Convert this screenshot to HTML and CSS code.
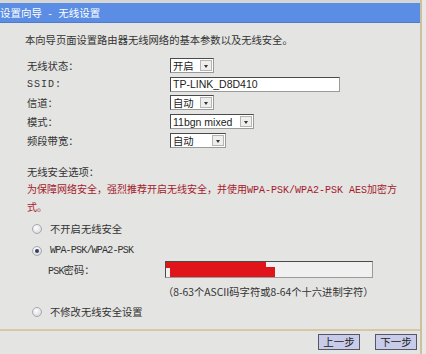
FILE: index.html
```html
<!DOCTYPE html>
<html lang="zh-CN">
<head>
    <meta charset="UTF-8">
    <title>设置向导 - 无线设置</title>
    <link rel="stylesheet" href="styles.css">
</head>
<body>

<div class="page">
    <div class="top-strip"></div>
    <div class="title-bar">设置向导 - 无线设置</div>

    <div class="content">
        <p class="intro">本向导页面设置路由器无线网络的基本参数以及无线安全。</p>

        <!-- 基本参数 -->
        <div class="fields">
            <div class="row">
                <span class="lbl">无线状态：</span>
                <div class="sel sel-state"><span>开启</span><i class="arr"></i></div>
            </div>
            <div class="row">
                <span class="lbl mono">SSID:</span>
                <div class="txt txt-ssid">TP-LINK_D8D410</div>
            </div>
            <div class="row">
                <span class="lbl">信道：</span>
                <div class="sel sel-state"><span>自动</span><i class="arr"></i></div>
            </div>
            <div class="row">
                <span class="lbl">模式：</span>
                <div class="sel sel-mode"><span class="latin">11bgn mixed</span><i class="arr"></i></div>
            </div>
            <div class="row">
                <span class="lbl">频段带宽：</span>
                <div class="sel sel-band"><span>自动</span><i class="arr"></i></div>
            </div>
        </div>

        <!-- 安全选项 -->
        <div class="sec-title">无线安全选项：</div>
        <p class="warn">为保障网络安全，强烈推荐开启无线安全，并使用<span class="mono-red">WPA-PSK/WPA2-PSK AES</span>加密方<br>式。</p>

        <div class="radio-row r1">
            <i class="radio"></i><span>不开启无线安全</span>
        </div>
        <div class="radio-row r2">
            <i class="radio checked"></i><span class="mono-sm">WPA-PSK/WPA2-PSK</span>
        </div>
        <div class="psk-row">
            <span class="psk-lbl"><span class="mono-sm">PSK</span>密码：</span>
            <div class="txt txt-psk">
                <div class="redact-a"></div>
                <div class="redact-b"></div>
            </div>
        </div>
        <div class="hint">（8-63个ASCII码字符或8-64个十六进制字符）</div>
        <div class="radio-row r3">
            <i class="radio"></i><span>不修改无线安全设置</span>
        </div>
    </div>

    <div class="footer">
        <button class="btn">上一步</button>
        <button class="btn">下一步</button>
    </div>
</div>

</body>
</html>
```

FILE: styles.css
```css
body {
    margin: 0;
    padding: 0;
    background-color: #e8e8e6;
    font-family: "Noto Sans CJK SC", "Liberation Sans", sans-serif;
    font-size: 10.3px;
    color: #333;
}
.page {
    width: 422px;
    height: 354px;
    border-right: 2px solid #cdbf9f;
    box-sizing: border-box;
    background-color: #e4e4e2;
    display: flex;
    flex-direction: column;
}
.top-strip {
    height: 3px;
    background-color: #d6d6d4;
}
.title-bar {
    height: 19px;
    line-height: 19px;
    background-color: #5a8de3;
    border-bottom: 1px solid #4f7cc9;
    color: #fff;
    font-size: 10.5px;
    word-spacing: 4px;
    white-space: pre;
}
.content {
    padding-left: 27px;
    flex: 1;
}
.intro {
    margin: 9px 0 0 -2px;
    height: 16px;
    line-height: 16px;
}
/* Campos */
.fields {
    margin-top: 8px;
}
.row {
    height: 18.75px;
    display: flex;
    align-items: center;
}
.lbl {
    width: 143px;
}
.mono {
    font-family: "Liberation Mono", monospace;
    font-size: 10px;
    letter-spacing: 1px;
}
.sel, .txt {
    height: 15px;
    box-sizing: border-box;
    border: 1px solid #4a4a4a;
    border-right-color: #9a9a9a;
    border-bottom-color: #9a9a9a;
    background-color: #fff;
    display: flex;
    align-items: center;
    padding-left: 2px;
    color: #222;
}
.sel span {
    flex: 1;
}
.latin, .txt-ssid {
    font-family: "Liberation Sans", Arial, sans-serif;
    font-size: 10.5px;
}
.arr {
    width: 12px;
    height: 11px;
    box-sizing: border-box;
    margin-right: 1px;
    border: 1px solid #b5b5b5;
    background-color: #eeeeec;
    position: relative;
}
.arr::after {
    content: "";
    position: absolute;
    left: 3px;
    top: 4px;
    border-left: 2.5px solid transparent;
    border-right: 2.5px solid transparent;
    border-top: 3px solid #333;
}
.sel-state { width: 44px; }
.sel-mode { width: 84px; }
.sel-band { width: 56px; }
.txt-ssid { width: 170px; }

.sec-title {
    margin-top: 14px;
    height: 16px;
    line-height: 16px;
}
.warn {
    margin: 1px 0 0 0;
    font-size: 10px;
    line-height: 16px;
    color: #a41a2b;
    white-space: nowrap;
}
.mono-red {
    font-family: "Liberation Mono", monospace;
    font-size: 10px;
}
.mono-sm {
    font-family: "Liberation Mono", monospace;
    font-size: 10px;
    letter-spacing: -0.8px;
}
.radio-row {
    display: flex;
    align-items: center;
    height: 16px;
    padding-left: 5px;
    gap: 8px;
}
.r1 { margin-top: 6px; }
.r2 { margin-top: 6px; }
.r3 { margin-top: 4px; }
.radio {
    width: 10px;
    height: 10px;
    border-radius: 50%;
    box-sizing: border-box;
    border: 1px solid #a8a8b0;
    background: radial-gradient(circle at 40% 35%, #fff, #d0d0d4);
    position: relative;
}
.radio.checked::after {
    content: "";
    position: absolute;
    left: 2px;
    top: 2px;
    width: 4px;
    height: 4px;
    border-radius: 50%;
    background-color: #2f3f6a;
}
.psk-row {
    display: flex;
    align-items: center;
    height: 18px;
    margin-top: 2px;
    padding-left: 21px;
}
.psk-lbl {
    width: 117px;
}
.txt-psk {
    width: 208px;
    height: 17px;
    padding: 0;
    display: block;
    position: relative;
    background-color: #f0f0f0;
}
.redact-a {
    position: absolute;
    left: 0;
    top: 0;
    width: 100px;
    height: 6px;
    background-color: #e0141b;
}
.redact-b {
    position: absolute;
    left: 4px;
    top: 5px;
    width: 105px;
    height: 10px;
    background-color: #e0141b;
}
.hint {
    margin-top: 5px;
    padding-left: 136px;
    height: 16px;
    line-height: 16px;
}
.footer {
    height: 20px;
    border-top: 2px solid #d8c6a4;
    display: flex;
    justify-content: flex-end;
    align-items: flex-start;
    padding-top: 3px;
    padding-right: 3px;
    gap: 15px;
}
.btn {
    width: 42px;
    height: 16px;
    padding: 0;
    margin: 0;
    border: 1px solid #55556a;
    background-color: #c8cce8;
    font-family: "Noto Sans CJK SC", sans-serif;
    font-size: 10.5px;
    color: #222;
    line-height: 14px;
}
```
